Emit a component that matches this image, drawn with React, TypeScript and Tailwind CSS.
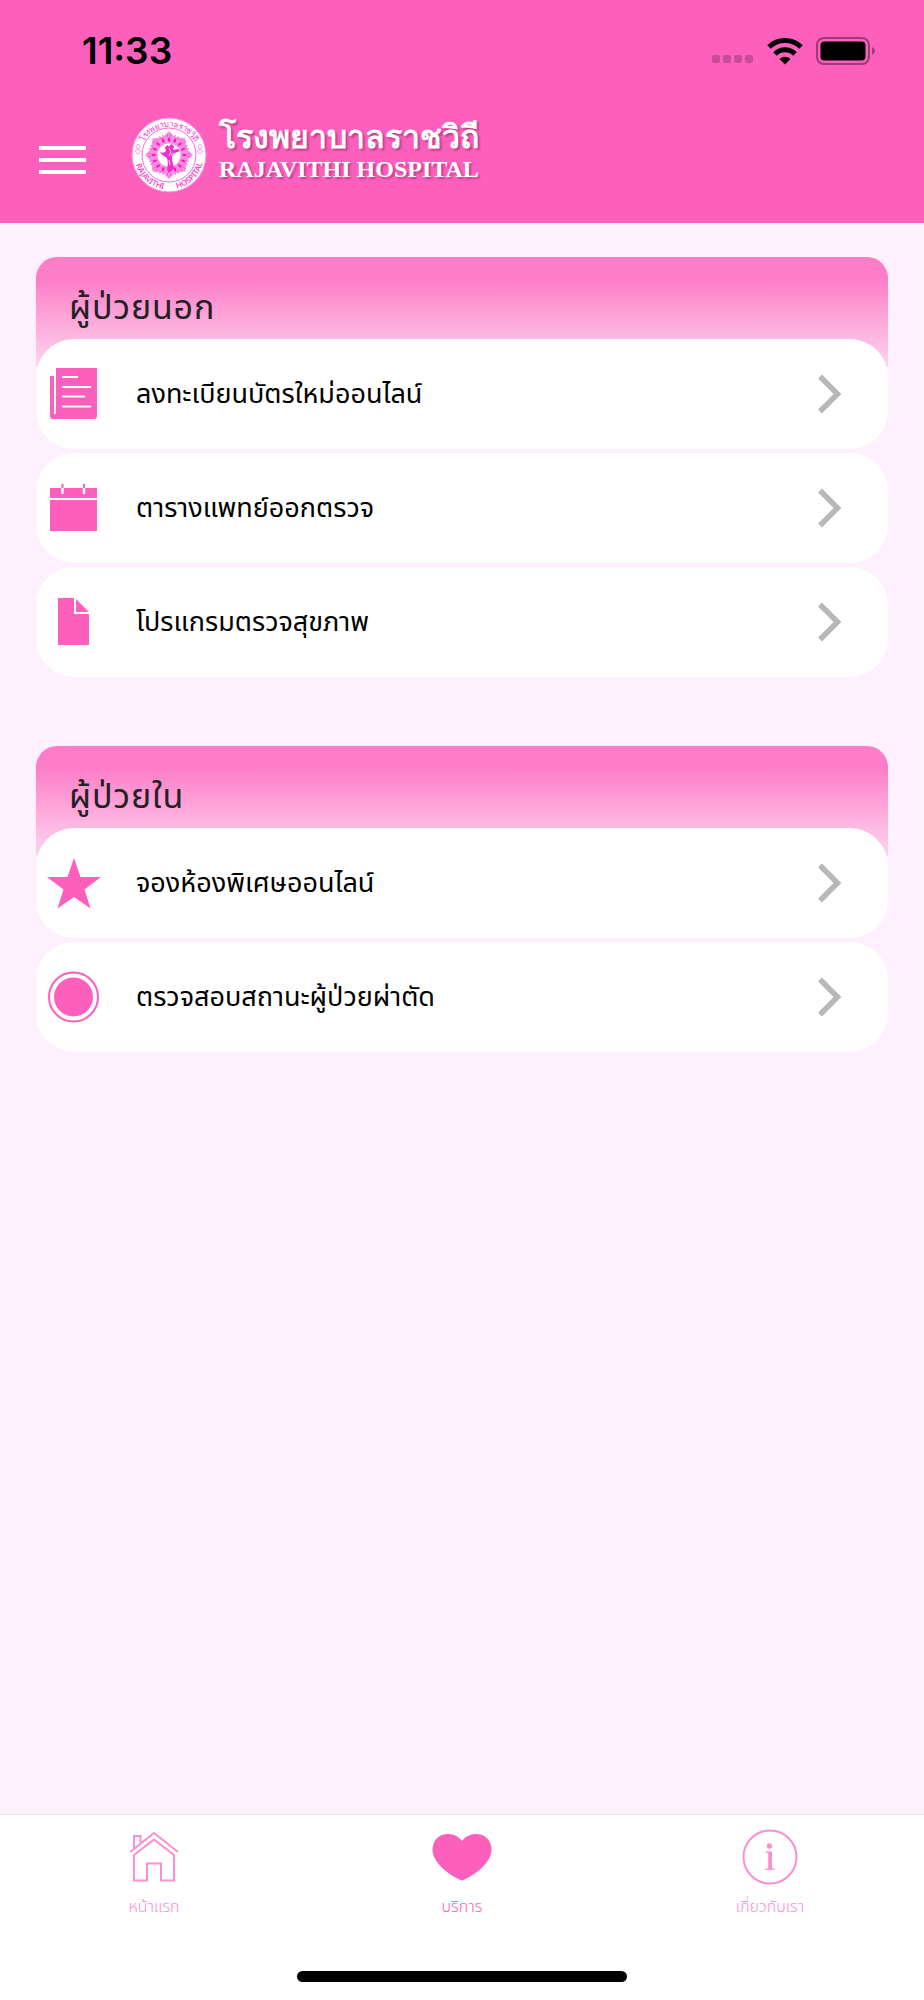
import { useState, type ReactNode } from "react";

interface ServiceItem {
  id: string;
  label: string;
  icon: ReactNode;
}

interface ServiceGroup {
  id: string;
  title: string;
  items: ServiceItem[];
}

const NewspaperIcon = () => (
  <svg width="48" height="52" viewBox="0 0 48 52" fill="#fd5fbd">
    <path d="M0 8h4v38h2V0h41v48q0 3-3 3H3q-3 0-3-3z" />
    <path d="M12 9h16M12 19h29M12 28.500h23M12 38.500h29" stroke="#fff" strokeWidth="2" />
  </svg>
);

const CalendarIcon = () => (
  <svg width="48" height="48" viewBox="0 0 48 48" fill="#fd5fbd">
    <path d="M0 4h47v10H0zM0 16h47v31H0z" />
    <path d="M12.500 3v7M34 3v7" stroke="#fff" strokeWidth="2.500" />
    <path d="M12.500 0v4M34 0v4" stroke="#fd5fbd" strokeWidth="2" />
  </svg>
);

const DocumentIcon = () => (
  <svg width="32" height="48" viewBox="0 0 32 48" fill="#fd5fbd">
    <path d="M0 0h16v16h15v31H0zM18 1l13 13H18z" />
  </svg>
);

const StarIcon = () => (
  <svg width="54" height="51" viewBox="0 0 54 51" fill="#fd5fbd">
    <path d="M27 0l6.500 19H54L37.500 31.500 43.500 50.500 27 39 10.500 50.500 16.500 31.500 0 19h20.500z" />
  </svg>
);

const RecordIcon = () => (
  <svg width="52" height="52" viewBox="0 0 52 52">
    <circle cx="25.500" cy="26" r="24.500" fill="none" stroke="#fd5fbd" strokeWidth="2" />
    <circle cx="25.500" cy="26" r="19.500" fill="#fd5fbd" />
  </svg>
);

const ChevronIcon = () => (
  <svg width="24" height="40" viewBox="0 0 24 40" className="mr-[46px] shrink-0">
    <path d="M2 2.500 19.500 20 2 37.500" fill="none" stroke="#b8b8b8" strokeWidth="5.500" />
  </svg>
);

const HomeIcon = () => (
  <svg width="50" height="50" viewBox="0 0 50 50" fill="none" stroke="#fd8fd1" strokeWidth="2">
    <path d="M1 20 25 1l24 19M5 16V4h6.500v7" />
    <path d="M5 48.500V23L25 7.500 45 23v25.500H32V31.500H18v17z" />
  </svg>
);

const HeartIcon = () => (
  <svg width="60" height="48" viewBox="0 0 60 48" fill="#fd5fbd">
    <path d="M30 8C27 4 22 1 16 1 7 1 .5 7 .5 17 .5 29 16 42 30 47.500 44 42 59.500 29 59.500 17 59.500 7 53 1 44 1c-6 0-11 3-14 7z" />
  </svg>
);

const InfoIcon = () => (
  <svg width="56" height="56" viewBox="0 0 56 56" fill="#fd8fd1">
    <circle cx="28" cy="28" r="26.500" fill="none" stroke="#fd8fd1" strokeWidth="2" />
    <circle cx="27.500" cy="17" r="2.700" />
    <path d="M24 22.500h6v16.700l2.500.5V41h-9v-1.300l2.700-.5V24.200L24 23.800z" />
  </svg>
);

const GROUPS: ServiceGroup[] = [
  {
    id: "outpatient",
    title: "ผู้ป่วยนอก",
    items: [
      { id: "register", label: "ลงทะเบียนบัตรใหม่ออนไลน์", icon: <NewspaperIcon /> },
      { id: "schedule", label: "ตารางแพทย์ออกตรวจ", icon: <CalendarIcon /> },
      { id: "checkup", label: "โปรแกรมตรวจสุขภาพ", icon: <DocumentIcon /> },
    ],
  },
  {
    id: "inpatient",
    title: "ผู้ป่วยใน",
    items: [
      { id: "room", label: "จองห้องพิเศษออนไลน์", icon: <StarIcon /> },
      { id: "surgery", label: "ตรวจสอบสถานะผู้ป่วยผ่าตัด", icon: <RecordIcon /> },
    ],
  },
];

const TABS = [
  { id: "home", label: "หน้าแรก", icon: <HomeIcon /> },
  { id: "services", label: "บริการ", icon: <HeartIcon /> },
  { id: "about", label: "เกี่ยวกับเรา", icon: <InfoIcon /> },
];

const PETALS = Array.from({ length: 16 }, (_, i) => i * 22.5);

function Seal() {
  return (
    <svg width="76" height="76" viewBox="-38 -38 76 76" className="shrink-0">
      <defs>
        <path id="seal-top" d="M-28.500 0a28.500 28.500 0 0 1 57 0" />
        <path id="seal-bottom" d="M-34.500 0a34.500 34.500 0 0 0 69 0" />
      </defs>
      <circle r="37" fill="#fff" stroke="#fd8fe0" strokeWidth="1" />
      <circle r="27" fill="none" stroke="#fa6ad8" strokeWidth="1" />
      <path
        d="M0-24 6-18 16.500-16.500 18-6 24 0 18 6 16.500 16.500 6 18 0 24-6 18-16.500 16.500-18 6-24 0-18-6-16.500-16.500-6-18z"
        fill="#fa8fe0"
      />
      {PETALS.map((angle) => (
        <g key={angle} transform={`rotate(${angle})`}>
          <path d="M0-18q2.600 3 0 5-2.600-2 0-5z" fill="#f318c0" />
          <path d="M-1.500-21v3M1.500-21v3" stroke="#f83fd0" strokeWidth=".7" />
        </g>
      ))}
      <circle r="11.500" fill="#fff" />
      <path
        d="M-10-3q5 2 7-1l-1-4 3-2 1 2 2-3 3 2-1 4 5-1 2 2-5 2-3 3 0 4 2 8-3 4-4-2 1-7-1-5-3-2z"
        fill="#f52cc8"
      />
      <path d="M0-7l2 4-2 4M0 5l1 5M5-2l-3 2" stroke="#fff" strokeWidth=".8" fill="none" />
      <path
        d="M-31-11q4 3 0 5 5 2 0 5M-31-11q-4 3 0 5-5 2 0 5M31-11q4 3 0 5 5 2 0 5M31-11q-4 3 0 5-5 2 0 5"
        fill="none"
        stroke="#fa7adb"
        strokeWidth=".8"
      />
      <g
        fill="#f52cc8"
        textAnchor="middle"
        className="font-['Noto_Sans',sans-serif] text-[8px] font-medium"
      >
        <text>
          <textPath href="#seal-top" startOffset="50%">
            โรงพยาบาลราชวิถี
          </textPath>
        </text>
        <text>
          <textPath href="#seal-bottom" startOffset="27%">
            RAJAVITHI
          </textPath>
        </text>
        <text>
          <textPath href="#seal-bottom" startOffset="75%">
            HOSPITAL
          </textPath>
        </text>
      </g>
    </svg>
  );
}

function StatusBar() {
  return (
    <div className="flex h-[101px] items-center pl-[82px] pr-12">
      <span className="flex-1 font-['Inter','Liberation_Sans',sans-serif] text-[37px] font-semibold leading-none text-black">
        11:33
      </span>
      <svg width="42" height="8" viewBox="0 0 42 8" fill="#c94c98" className="mr-3 mt-4">
        <rect width="8" height="8" rx="2" />
        <rect x="11" width="8" height="8" rx="2" />
        <rect x="22" width="8" height="8" rx="2" />
        <rect x="33" width="8" height="8" rx="2" />
      </svg>
      <svg width="38" height="28" viewBox="0 0 38 28" className="mr-3">
        <g fill="none" stroke="#000" strokeWidth="5">
          <path d="M3 10a23 23 0 0 1 32 0" />
          <path d="M9 17a14 14 0 0 1 20 0" />
        </g>
        <path d="M13.500 22a8 8 0 0 1 11 0L19 27.500z" />
      </svg>
      <svg width="60" height="28" viewBox="0 0 60 28">
        <rect x="1" y="1" width="52" height="26" rx="7" fill="none" stroke="#9c3b75" strokeWidth="2" />
        <rect x="4.500" y="4.500" width="45" height="19" rx="4" />
        <path d="M56 10q6 4 0 8z" fill="#9c3b75" />
      </svg>
    </div>
  );
}

function ServiceSection({ group }: { group: ServiceGroup }) {
  return (
    <section aria-labelledby={group.id}>
      <div className="h-[110px] rounded-t-[21px] bg-linear-to-b from-[#fc7dc8] from-20% to-[#fbd5ef] px-[33px] pt-7">
        <h2 id={group.id} className="text-[34px] leading-[48px] tracking-wide text-[#222]">
          {group.title}
        </h2>
      </div>
      <ul className="-mt-7 flex flex-col gap-1">
        {group.items.map((item) => (
          <li key={item.id}>
            <button
              type="button"
              className="flex h-[110px] w-full cursor-pointer items-center rounded-[38px] bg-white text-left"
            >
              <span className="flex w-[76px] shrink-0 justify-center">{item.icon}</span>
              <span className="ml-6 flex-1 pt-0.5 text-[27px] leading-10 text-black">
                {item.label}
              </span>
              <ChevronIcon />
            </button>
          </li>
        ))}
      </ul>
    </section>
  );
}

export default function App() {
  const [tab, setTab] = useState("services");

  return (
    <div className="flex min-h-screen flex-col bg-[#fff0ff] font-['Noto_Sans_Thai','Noto_Sans',sans-serif]">
      <header className="bg-[#fd5fbd]">
        <StatusBar />
        <div className="flex h-[122px] items-start pl-[39px] pt-4">
          <button type="button" aria-label="เมนู" className="mt-7 cursor-pointer">
            <svg width="47" height="30" viewBox="0 0 47 30" stroke="#fff" strokeWidth="4">
              <path d="M0 3h47M0 15h47M0 27h47" />
            </svg>
          </button>
          <div className="ml-[45px] flex items-start gap-3 text-white">
            <Seal />
            <div className="font-['Liberation_Serif',serif] font-bold text-shadow-[2px_2px_2px_rgb(120_40_90/0.5)]">
              <p className="text-[32px] leading-10">โรงพยาบาลราชวิถี</p>
              <p className="text-[24px] leading-6">RAJAVITHI HOSPITAL</p>
            </div>
          </div>
        </div>
      </header>

      <main className="flex flex-1 flex-col gap-[69px] px-9 pt-[34px]">
        {GROUPS.map((group) => (
          <ServiceSection key={group.id} group={group} />
        ))}
      </main>

      <footer className="border-t border-[#ece4ec] bg-white">
        <nav className="grid h-[156px] grid-cols-3">
          {TABS.map((t) => (
            <button
              key={t.id}
              type="button"
              onClick={() => setTab(t.id)}
              className={
                "flex cursor-pointer flex-col items-center pt-3 " +
                (tab === t.id ? "text-[#fd5fbd]" : "text-[#fd8fd1]")
              }
            >
              <span className="flex h-[60px] items-center">{t.icon}</span>
              <span className="mt-2 text-[16px] font-light leading-6">{t.label}</span>
            </button>
          ))}
        </nav>
        <div className="mx-auto mb-[18px] h-[11px] w-[330px] rounded-full bg-black" />
      </footer>
    </div>
  );
}
